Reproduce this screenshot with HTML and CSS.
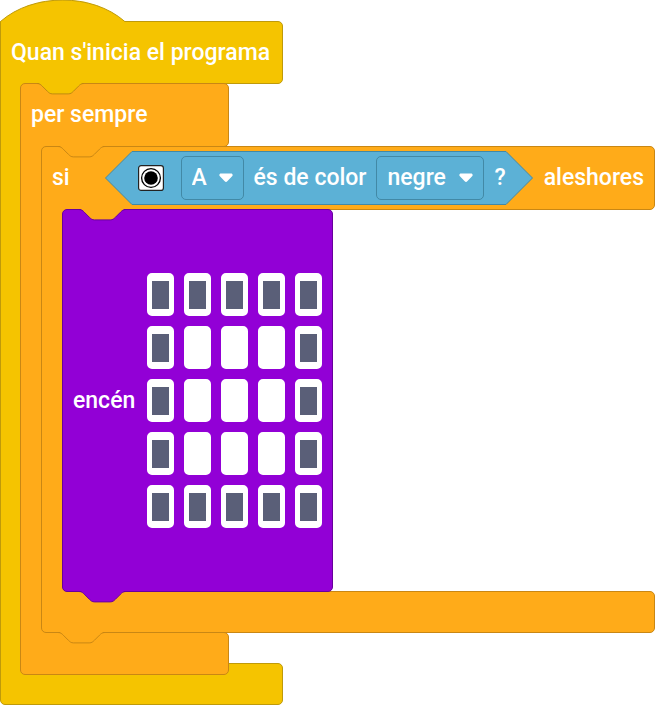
FILE: index.html
```html
<!DOCTYPE html>
<html lang="ca">
<head>
<meta charset="utf-8">
<meta name="viewport" content="width=device-width, initial-scale=1">
<title>Programa</title>
<link rel="stylesheet" href="styles.css">
</head>
<body>
<svg class="defs" aria-hidden="true">
  <symbol id="notch" viewBox="0 0 47 12">
    <path class="notch-fill" d="M2 0V.8C4 1 4.500 2.400 5.200 3.100L10.400 8.300C11.700 9.600 13 10.900 15.600 10.900H31.200C33.800 10.900 35.100 9.600 36.400 8.300L41.600 3.100C42.500 2.200 43 1 45 .8V0Z"/>
    <path class="notch-line" d="M0 .5C2.600 .5 3.900 1.800 5.200 3.100L10.400 8.300C11.700 9.600 13 10.900 15.600 10.900H31.200C33.800 10.900 35.100 9.600 36.400 8.300L41.600 3.100C42.900 1.800 44.200 .5 46.800 .5"/>
  </symbol>
  <symbol id="caret" viewBox="0 0 14 10">
    <path d="M2 .5H12C13.600 .5 14.200 2.100 13.100 3.200L8.300 8.300C7.500 9.200 6.500 9.200 5.700 8.300L.9 3.200C-.2 2.100 .4 .5 2 .5Z" fill="#fff"/>
  </symbol>
</svg>
<main class="block start">
  <svg class="hat" viewBox="0 0 126 22" aria-hidden="true">
    <path class="hat-fill" d="M.5 22V21.500C33 -7.100 92.300 -7.100 124.800 21.500V22Z"/>
    <path class="hat-line" d="M.5 22V21.500C33 -7.100 92.300 -7.100 124.800 21.500"/>
  </svg>
  <header class="head">Quan s'inicia el programa</header>
  <div class="inside">
    <section class="block control forever">
      <svg class="notch from-start" aria-hidden="true"><use href="#notch"/></svg>
      <header class="head">per sempre</header>
      <div class="inside">
        <section class="block control condition">
          <svg class="notch from-control" aria-hidden="true"><use href="#notch"/></svg>
          <header class="head">
            <span>si</span>
            <div class="sensor">
              <svg class="tip" viewBox="0 0 27 54" aria-hidden="true"><path class="tip-fill" d="M27 .5L.5 27L27 53.500Z"/><path class="tip-line" d="M27 .5L.5 27L27 53.500"/></svg>
              <div class="sensor-body">
                <svg class="eye" viewBox="0 0 26 26" aria-hidden="true"><rect x=".6" y=".6" width="24.800" height="24.800" rx="2.500" fill="#fff" stroke="#222" stroke-width="1.200"/><circle cx="13" cy="13" r="9.400" fill="#fff" stroke="#000" stroke-width="1.300"/><circle cx="13" cy="13" r="6.800"/></svg>
                <span class="picker port"><select aria-label="Port"><option>A</option><option>B</option></select><svg class="caret" aria-hidden="true"><use href="#caret"/></svg></span>
                <span>és de color</span>
                <span class="picker color"><select aria-label="Color"><option>negre</option><option>blanc</option></select><svg class="caret" aria-hidden="true"><use href="#caret"/></svg></span>
                <span>?</span>
              </div>
              <svg class="tip" viewBox="0 0 27 54" aria-hidden="true"><path class="tip-fill" d="M0 .5L26.500 27L0 53.500Z"/><path class="tip-line" d="M0 .5L26.500 27L0 53.500"/></svg>
            </div>
            <span>aleshores</span>
          </header>
          <div class="inside">
            <section class="light">
              <svg class="notch from-control" aria-hidden="true"><use href="#notch"/></svg>
              <span>encén</span>
              <div class="matrix">
                <input type="checkbox" aria-label="1, 1"><input type="checkbox" aria-label="1, 2"><input type="checkbox" aria-label="1, 3"><input type="checkbox" aria-label="1, 4"><input type="checkbox" aria-label="1, 5">
                <input type="checkbox" aria-label="2, 1"><input type="checkbox" aria-label="2, 2" checked><input type="checkbox" aria-label="2, 3" checked><input type="checkbox" aria-label="2, 4" checked><input type="checkbox" aria-label="2, 5">
                <input type="checkbox" aria-label="3, 1"><input type="checkbox" aria-label="3, 2" checked><input type="checkbox" aria-label="3, 3" checked><input type="checkbox" aria-label="3, 4" checked><input type="checkbox" aria-label="3, 5">
                <input type="checkbox" aria-label="4, 1"><input type="checkbox" aria-label="4, 2" checked><input type="checkbox" aria-label="4, 3" checked><input type="checkbox" aria-label="4, 4" checked><input type="checkbox" aria-label="4, 5">
                <input type="checkbox" aria-label="5, 1"><input type="checkbox" aria-label="5, 2"><input type="checkbox" aria-label="5, 3"><input type="checkbox" aria-label="5, 4"><input type="checkbox" aria-label="5, 5">
              </div>
              <svg class="notch tab from-light" aria-hidden="true"><use href="#notch"/></svg>
            </section>
          </div>
          <div class="foot"></div>
          <svg class="notch tab from-control" aria-hidden="true"><use href="#notch"/></svg>
        </section>
      </div>
      <div class="foot"></div>
    </section>
  </div>
  <div class="foot"></div>
</main>
</body>
</html>
```
FILE: styles.css
```css
* { box-sizing: border-box; }

body {
  margin: 0;
  background: #fff;
  color: #fff;
  font: 500 23px/28px Roboto, "Liberation Sans", sans-serif;
  white-space: nowrap;
}

svg { display: block; flex: none; }
.defs { position: absolute; width: 0; height: 0; }

/* C-shaped blocks: head, arm with nested content, foot */
.block { position: relative; }
.start { --fill: #f5c400; --line: #bf9a0a; --span: 283px; }
.control { --fill: #ffab19; --line: #c98714; }
.forever { --span: 209px; }
.condition { --span: 100%; }

.head,
.foot {
  width: var(--span);
  background: var(--fill);
  border: 1px solid var(--line);
}

.head {
  display: flex;
  align-items: center;
  min-height: 64px;
  padding: 0 10px;
  border-radius: 5px 5px 5px 0;
}

.foot {
  height: 43px;
  margin-top: -1px;
  border-radius: 0 5px 5px 5px;
}

.inside {
  position: relative;
  z-index: 1;
  margin-top: -1px;
  padding-left: 20px;
  border-left: 1px solid var(--line);
  background: linear-gradient(var(--fill), var(--fill)) 0 0 / 26px 100% no-repeat;
}

.start > .head { min-height: 63px; border-top-left-radius: 0; }
.start > .inside { padding-left: 19px; }
.start > .foot { height: 42px; margin-top: -12px; }
.condition > .foot { height: 42px; }

.hat { width: 126px; height: 22px; margin-bottom: -1px; position: relative; }
.hat-fill { fill: var(--fill); }
.hat-line { fill: none; stroke: var(--line); }

/* Connectors */
.notch {
  position: absolute;
  z-index: 2;
  top: 0;
  left: 17px;
  width: 47px;
  height: 12px;
}
.notch.tab { top: auto; bottom: -11px; }
.notch-fill { fill: var(--joint); }
.notch-line { fill: none; stroke: var(--joint-line); }
.from-start { --joint: #f5c400; --joint-line: #bf8a10; }
.from-control { --joint: #ffab19; --joint-line: #c98714; }
.light .from-control { --joint-line: #68009c; }
.from-light { --joint: #9200d6; --joint-line: #68009c; }
.light .notch { left: 16px; }
.light .notch:first-child { top: -1px; }
.light .tab { bottom: -12px; }

/* Condition row */
.condition > .head > span:first-child { flex: 1; }

.sensor { display: flex; margin-right: 11px; }
.tip { width: 27px; height: 54px; }
.tip-fill { fill: #5cb1d6; }
.tip-line { fill: none; stroke: #4289a6; }

.sensor-body {
  display: flex;
  align-items: center;
  gap: 10px;
  height: 54px;
  background: #5cb1d6;
  border: solid #4289a6;
  border-width: 1px 0;
}

.eye { width: 26px; height: 26px; margin: 0 7px 0 6px; }

.picker { position: relative; }
.picker select {
  appearance: none;
  width: 100%;
  height: 44px;
  padding: 0 10px;
  border: 1px solid #4289a6;
  border-radius: 5px;
  background: transparent;
  color: inherit;
  font: inherit;
}
.port { width: 63px; }
.color { width: 108px; }
.caret {
  position: absolute;
  right: 11px;
  top: 17px;
  width: 14px;
  height: 10px;
  pointer-events: none;
}

/* Light matrix */
.light {
  position: relative;
  display: flex;
  align-items: center;
  justify-content: space-between;
  width: 271px;
  padding: 63px 10px;
  background: #9200d6;
  border: 1px solid #68009c;
  border-radius: 5px;
}

.matrix { display: grid; grid-template-columns: repeat(5, 27px); gap: 10px; }

.matrix input {
  appearance: none;
  width: 27px;
  height: 43px;
  margin: 0;
  border: solid #fff;
  border-width: 8px 5px 7px;
  border-radius: 5px;
  background: #5a5f78;
}
.matrix input:checked { background: #fff; }
```
